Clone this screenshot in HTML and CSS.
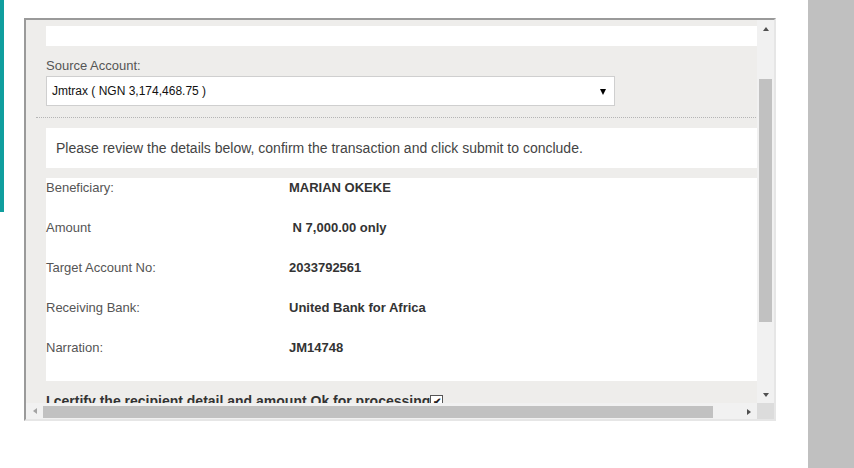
FILE: index.html
```html
<!DOCTYPE html>
<html>
<head>
<meta charset="utf-8">
<link rel="stylesheet" href="styles.css">
</head>
<body>
<div class="accent"></div>
<div class="panel">
  <div class="viewport">
    <div class="content">
      <div class="band"></div>
      <div class="field">
        <div class="label">Source Account:</div>
        <div class="select">
          <span>Jmtrax ( NGN 3,174,468.75 )</span>
          <span class="caret"></span>
        </div>
      </div>
      <div class="dots"></div>
      <div class="notice">Please review the details below, confirm the transaction and click submit to conclude.</div>
      <div class="details">
        <div class="row"><div class="k">Beneficiary:</div><div class="v">MARIAN OKEKE</div></div>
        <div class="row"><div class="k">Amount</div><div class="v">&nbsp;N 7,000.00 only</div></div>
        <div class="row"><div class="k">Target Account No:</div><div class="v">2033792561</div></div>
        <div class="row"><div class="k">Receiving Bank:</div><div class="v">United Bank for Africa</div></div>
        <div class="row"><div class="k">Narration:</div><div class="v">JM14748</div></div>
      </div>
      <div class="certify">I certify the recipient detail and amount Ok for processing<span class="check">&#10004;</span></div>
    </div>
  </div>
  <div class="vscroll">
    <div class="btn"><span class="tri up"></span></div>
    <div class="vtrack"><div class="vthumb"></div></div>
    <div class="btn"><span class="tri down"></span></div>
  </div>
  <div class="hscroll">
    <div class="hbtn"><span class="tri left"></span></div>
    <div class="htrack"><div class="hthumb"></div></div>
    <div class="hbtn"><span class="tri right"></span></div>
  </div>
  <div class="corner"></div>
</div>
<div class="side"></div>
</body>
</html>
```

FILE: styles.css
```css
html, body { margin: 0; padding: 0; background: #fff; }
body {
  display: flex;
  align-items: flex-start;
  width: 854px;
  height: 468px;
  overflow: hidden;
  font-family: "Liberation Sans", Arial, sans-serif;
}
.accent { width: 4px; height: 212px; background: #109e9e; flex: none; }
.panel {
  flex: none;
  margin: 18px 0 0 20px;
  width: 752px;
  height: 403px;
  box-sizing: border-box;
  border-style: solid;
  border-width: 2px;
  border-color: #9a9a9a #e6e6e6 #e6e6e6 #9a9a9a;
  display: grid;
  grid-template-columns: 731px 17px;
  grid-template-rows: 383px 16px;
}
.viewport { overflow: hidden; background: #eeedeb; }
.content { width: 770px; padding: 6px 0 0 10px; box-sizing: border-box; }
.band { height: 20px; background: #fff; margin-left: 10px; }
.field { margin: 11px 0 0 10px; }
.label { font-size: 13px; line-height: 18px; color: #555; }
.select {
  margin-top: 1px;
  width: 569px;
  height: 30px;
  box-sizing: border-box;
  border: 1px solid #cfcfcf;
  background: #fff;
  display: flex;
  align-items: center;
  justify-content: space-between;
  padding: 0 8px 0 5px;
  font-size: 12px;
  color: #111;
}
.caret {
  width: 0; height: 0;
  border-left: 3.5px solid transparent;
  border-right: 3.5px solid transparent;
  border-top: 6px solid #000;
  margin-top: 1px;
}
.dots { margin-top: 11px; border-top: 1px dotted #b5b5b5; }
.notice {
  margin: 10px 0 0 10px;
  height: 40px;
  background: #fff;
  padding-left: 10px;
  font-size: 14px;
  line-height: 40px;
  color: #444;
}
.details { margin: 10px 0 0 10px; background: #fff; padding-bottom: 3px; }
.row { display: flex; font-size: 13px; line-height: 20px; padding-bottom: 20px; }
.k { width: 243px; color: #555; }
.v { font-weight: bold; color: #333; }
.certify {
  margin: 11px 0 0 10px;
  font-size: 14px;
  line-height: 18px;
  font-weight: bold;
  color: #333;
  white-space: nowrap;
}
.check {
  display: inline-block;
  width: 11px; height: 11px;
  border: 1px solid #555;
  background: #fff;
  font-size: 10px;
  line-height: 11px;
  text-align: center;
  vertical-align: 1px;
  color: #222;
  margin-left: 0;
}
.vscroll { background: #f1f1f1; display: flex; flex-direction: column; }
.btn { height: 17px; display: flex; align-items: center; justify-content: center; flex: none; }
.vtrack { flex: 1; padding-top: 42px; }
.vthumb { margin-left: 2px; width: 13px; height: 243px; background: #c1c1c1; }
.hscroll { background: #f1f1f1; display: flex; }
.hbtn { width: 17px; display: flex; align-items: center; justify-content: center; flex: none; }
.htrack { flex: 1; display: flex; align-items: center; }
.hthumb { width: 670px; height: 12px; background: #c1c1c1; margin-top: 1px; }
.corner { background: #dcdcdc; }
.tri { width: 0; height: 0; display: block; }
.up { border-left: 3.5px solid transparent; border-right: 3.5px solid transparent; border-bottom: 4px solid #505050; margin-top: 1px; }
.down { border-left: 3.5px solid transparent; border-right: 3.5px solid transparent; border-top: 4px solid #505050; }
.left { border-top: 3.5px solid transparent; border-bottom: 3.5px solid transparent; border-right: 4px solid #a3a3a3; }
.right { border-top: 3.5px solid transparent; border-bottom: 3.5px solid transparent; border-left: 4px solid #505050; margin-top: 1px; }
.side { flex: none; margin-left: auto; width: 46px; height: 468px; background: #c0c0c0; }
```
